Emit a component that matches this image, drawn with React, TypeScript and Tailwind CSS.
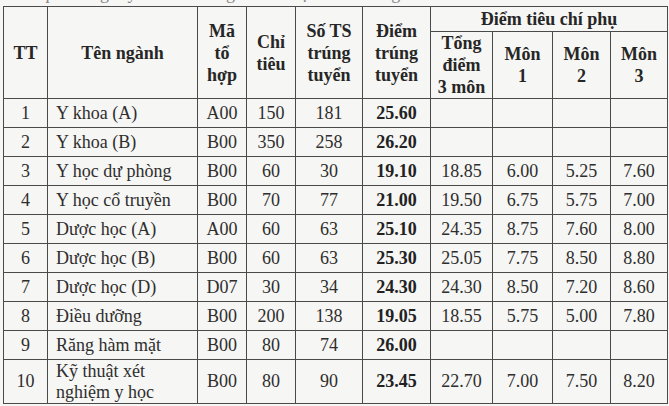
const rows: [string, string, string, string, string, string, string, string, string, string][] = [
  ["1", "Y khoa (A)", "A00", "150", "181", "25.60", "", "", "", ""],
  ["2", "Y khoa (B)", "B00", "350", "258", "26.20", "", "", "", ""],
  ["3", "Y học dự phòng", "B00", "60", "30", "19.10", "18.85", "6.00", "5.25", "7.60"],
  ["4", "Y học cổ truyền", "B00", "70", "77", "21.00", "19.50", "6.75", "5.75", "7.00"],
  ["5", "Dược học (A)", "A00", "60", "63", "25.10", "24.35", "8.75", "7.60", "8.00"],
  ["6", "Dược học (B)", "B00", "60", "63", "25.30", "25.05", "7.75", "8.50", "8.80"],
  ["7", "Dược học (D)", "D07", "30", "34", "24.30", "24.30", "8.50", "7.20", "8.60"],
  ["8", "Điều dưỡng", "B00", "200", "138", "19.05", "18.55", "5.75", "5.00", "7.80"],
  ["9", "Răng hàm mặt", "B00", "80", "74", "26.00", "", "", "", ""],
  ["10", "Kỹ thuật xét nghiệm y học", "B00", "80", "90", "23.45", "22.70", "7.00", "7.50", "8.20"],
];

const widths = [44, 150, 49, 49, 67, 68, 62, 60, 58, 57];

const serif = "font-[Liberation_Serif,DejaVu_Serif,serif]";
const cell = `${serif} border border-[#4a4a4a] p-0 align-middle`;

export default function App() {
  return (
    <div className={`h-[406px] w-[669px] overflow-hidden bg-[#f6f6f4] text-[18px] text-[#2e2e2e] ${serif}`}>
      <div className="h-[6px] overflow-hidden pl-[14px] text-[#888]">
        <div className="-mt-[18px] leading-[22px]">
          kết quả trúng tuyển vào các ngành đào tạo của trường như sau:
        </div>
      </div>
      <table className={`ml-[3px] w-[665px] table-fixed border-collapse ${serif}`}>
        <colgroup>
          {widths.map((w, i) => (
            <col key={i} style={{ width: w }} />
          ))}
        </colgroup>
        <thead className="font-bold leading-[22px] text-[#262626]">
          <tr className="h-[25px]">
            <th rowSpan={2} className={cell}>TT</th>
            <th rowSpan={2} className={cell}>Tên ngành</th>
            <th rowSpan={2} className={cell}>
              Mã
              <br />
              tổ
              <br />
              hợp
            </th>
            <th rowSpan={2} className={cell}>
              Chỉ
              <br />
              tiêu
            </th>
            <th rowSpan={2} className={cell}>
              Số TS
              <br />
              trúng
              <br />
              tuyển
            </th>
            <th rowSpan={2} className={cell}>
              Điểm
              <br />
              trúng
              <br />
              tuyển
            </th>
            <th colSpan={4} className={cell}>Điểm tiêu chí phụ</th>
          </tr>
          <tr className="h-[67px]">
            <th className={cell}>
              Tổng
              <br />
              điểm
              <br />
              3 môn
            </th>
            <th className={cell}>
              Môn
              <br />1
            </th>
            <th className={cell}>
              Môn
              <br />2
            </th>
            <th className={cell}>
              Môn
              <br />3
            </th>
          </tr>
        </thead>
        <tbody className="leading-[21px]">
          {rows.map((r, i) => (
            <tr key={r[0]} className={i === rows.length - 1 ? "h-[44px]" : "h-[29px]"}>
              <td className={`${cell} text-center`}>{r[0]}</td>
              <td className={`${cell} pl-[8px] pr-[4px] text-left`}>{r[1]}</td>
              <td className={`${cell} text-center`}>{r[2]}</td>
              <td className={`${cell} text-center`}>{r[3]}</td>
              <td className={`${cell} text-center`}>{r[4]}</td>
              <td className={`${cell} text-center font-bold text-[#222]`}>{r[5]}</td>
              <td className={`${cell} text-center`}>{r[6]}</td>
              <td className={`${cell} text-center`}>{r[7]}</td>
              <td className={`${cell} text-center`}>{r[8]}</td>
              <td className={`${cell} text-center`}>{r[9]}</td>
            </tr>
          ))}
        </tbody>
      </table>
    </div>
  );
}
